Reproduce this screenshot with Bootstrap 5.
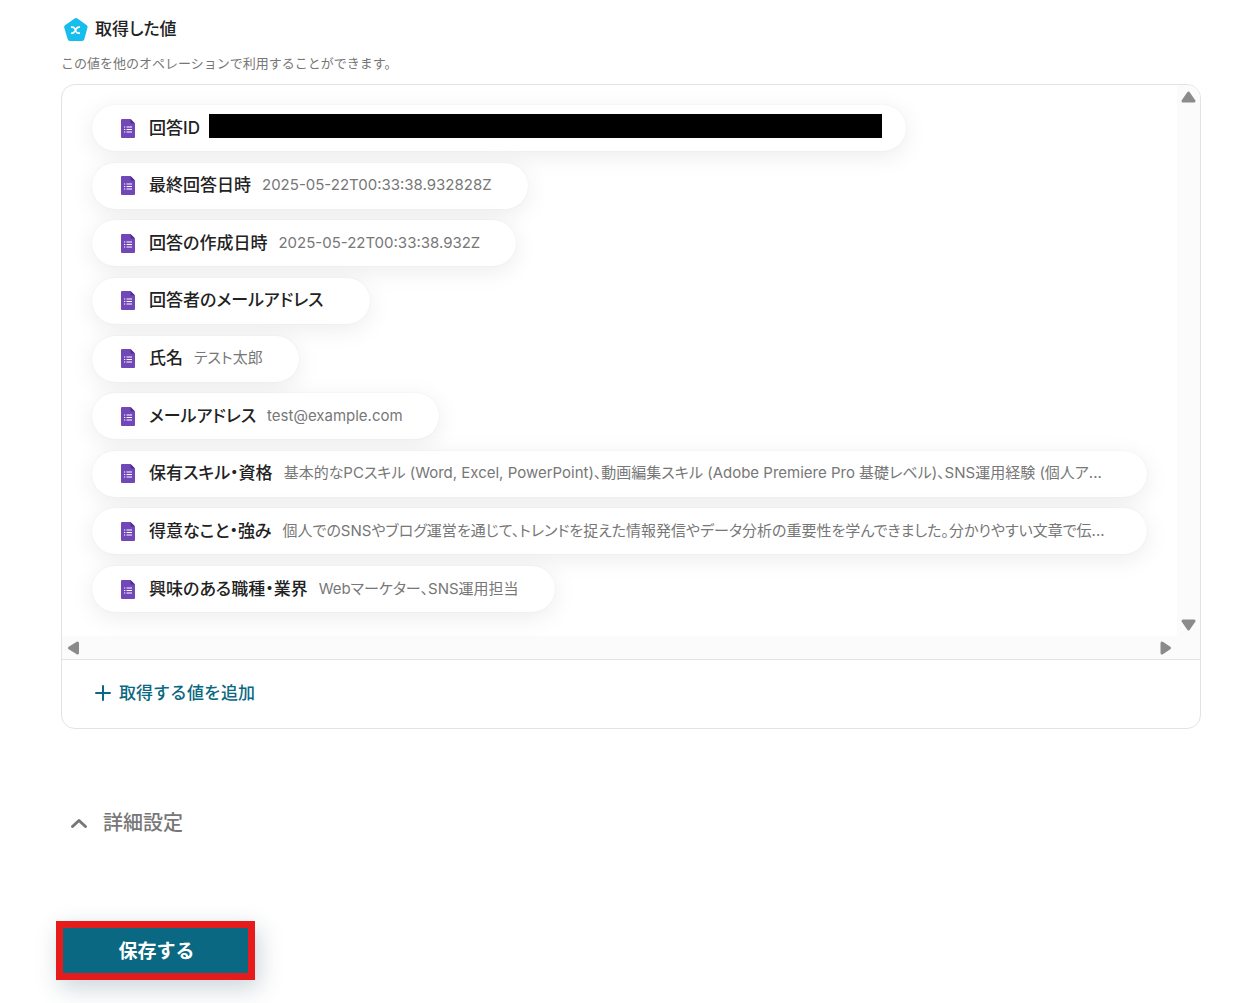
<!DOCTYPE html>
<html lang="ja">
<head>
<meta charset="utf-8">
<meta name="viewport" content="width=device-width, initial-scale=1">
<title>取得した値</title>
<link href="https://cdn.jsdelivr.net/npm/bootstrap@5.3.0/dist/css/bootstrap.min.css" rel="stylesheet">
<style>
  body { font-family: Inter, "Noto Sans CJK JP", sans-serif; font-feature-settings: "palt"; color: #222; background: #fff; }
  .page-body { padding: 16px 51px 24px 61px; }
  .section-title { font-size: 17px; line-height: 26px; font-weight: 500; gap: 6px; padding-left: 2px; }
  .hint { font-size: 13px; line-height: 20px; color: #777; margin: 11px 0; font-feature-settings: normal; }
  .panel { border: 1px solid #e3e3e3; border-radius: 14px; overflow: hidden; }
  .scroller { display: grid; grid-template-columns: minmax(0, 1fr) 23px; grid-template-rows: auto 23px; border-bottom: 1px solid #e3e3e3; }
  .values { min-height: 551px; padding: 20px 30px 24px; overflow: hidden; }
  .pill { height: 46px; max-width: 100%; border-radius: 23px; background: #fff; padding: 0 36px 0 29px; box-shadow: 0 5px 24px rgba(0, 0, 0, .08), 0 0 2px rgba(0, 0, 0, .06); }
  .pill-redacted { padding-right: 24px; }
  .pill svg { margin-right: 14px; }
  .pill-name { font-size: 17px; line-height: 26px; font-weight: 500; margin-right: 11px; padding-bottom: 1px; }
  .pill-redacted .pill-name { margin-right: 9px; }
  .pill-value { font-size: 15px; line-height: 24px; color: #777; padding-bottom: 1px; }
  .redaction { width: 673px; height: 24px; background: #000; margin-bottom: 4px; }
  .track { background: #fbfbfb; }
  .track-y { padding: 6px 4px 5px; }
  .track-x { padding: 0 5px; }
  .corner { background: #fbfbfb; }
  .add-link { color: #0b6882; font-size: 17px; line-height: 26px; font-weight: 500; gap: 8px; }
  .panel-foot { padding: 20px 33px 22px; }
  .details-toggle { color: #777; font-size: 20px; line-height: 30px; font-weight: 500; gap: 15px; margin-top: 79px; padding-left: 9px; }
  .save-area { margin: 83px 0 0 -5px; }
  .save-btn { border: 7px solid #e61c1c; border-radius: 0; width: 199px; height: 59px; background: #0b6882; color: #fff; font-size: 19px; line-height: 28px; font-weight: 700; padding: 2px 0 0 2px; box-shadow: 4px 8px 24px rgba(20, 60, 80, .22); }
  .save-btn:hover { background: #0b6882; color: #fff; border-color: #e61c1c; }
</style>
<script src="https://cdn.jsdelivr.net/npm/bootstrap@5.3.0/dist/js/bootstrap.bundle.min.js"></script>
</head>
<body>
<svg class="d-none">
  <symbol id="form-icon" viewBox="0 0 14 19">
    <path d="M1 0H9.500l4.500 4.500V18a1 1 0 0 1-1 1H1a1 1 0 0 1-1-1V1a1 1 0 0 1 1-1z" fill="#7248b9"/>
    <path d="M9.500 0l4.500 4.500H10.500a1 1 0 0 1-1-1z" fill="#4f2f8c"/>
    <path d="M5.500 8H11M5.500 10.500H11M5.500 13H11M3 8h1.200M3 10.500h1.200M3 13h1.200" stroke="#fff" stroke-width="1.100"/>
  </symbol>
</svg>
<main class="page-body">
  <h1 class="section-title d-flex align-items-center mb-0">
    <svg width="26" height="26" viewBox="0 0 26 26" aria-hidden="true">
      <path d="M11.600 2.600Q13 1.600 14.400 2.600L23.800 9.200Q25 10.200 24.500 11.600L21.300 23.300Q20.800 25 19.200 25H6.800Q5.200 25 4.700 23.300L1.200 11.600Q.8 10.200 2 9.200Z" fill="#17bdec"/>
      <path d="M8 11.200c2.300-.4 3.300.3 4 1.800l1 2.500c.6 1.400 1.800 2 4 1.600M17 11.200c-2.300-.4-3.400.6-4.500 2.900s-2.200 3.500-4.500 3.100" fill="none" stroke="#fff" stroke-width="1.700"/>
    </svg>
    取得した値
  </h1>
  <p class="hint">この値を他のオペレーションで利用することができます。</p>

  <section class="panel">
    <div class="scroller">
      <ul class="values list-unstyled mb-0 d-flex flex-column justify-content-between align-items-start">
        <li class="pill pill-redacted d-flex align-items-center"><svg class="flex-shrink-0" width="14" height="19"><use href="#form-icon"/></svg><span class="pill-name text-nowrap">回答ID</span><span class="redaction"></span></li>
        <li class="pill d-flex align-items-center"><svg class="flex-shrink-0" width="14" height="19"><use href="#form-icon"/></svg><span class="pill-name text-nowrap">最終回答日時</span><span class="pill-value text-truncate">2025-05-22T00:33:38.932828Z</span></li>
        <li class="pill d-flex align-items-center"><svg class="flex-shrink-0" width="14" height="19"><use href="#form-icon"/></svg><span class="pill-name text-nowrap">回答の作成日時</span><span class="pill-value text-truncate">2025-05-22T00:33:38.932Z</span></li>
        <li class="pill d-flex align-items-center"><svg class="flex-shrink-0" width="14" height="19"><use href="#form-icon"/></svg><span class="pill-name text-nowrap">回答者のメールアドレス</span></li>
        <li class="pill d-flex align-items-center"><svg class="flex-shrink-0" width="14" height="19"><use href="#form-icon"/></svg><span class="pill-name text-nowrap">氏名</span><span class="pill-value text-truncate">テスト太郎</span></li>
        <li class="pill d-flex align-items-center"><svg class="flex-shrink-0" width="14" height="19"><use href="#form-icon"/></svg><span class="pill-name text-nowrap">メールアドレス</span><span class="pill-value text-truncate">test@example.com</span></li>
        <li class="pill w-100 d-flex align-items-center"><svg class="flex-shrink-0" width="14" height="19"><use href="#form-icon"/></svg><span class="pill-name text-nowrap">保有スキル・資格</span><span class="pill-value text-nowrap">基本的なPCスキル (Word, Excel, PowerPoint)、動画編集スキル (Adobe Premiere Pro 基礎レベル)、SNS運用経験 (個人ア...</span></li>
        <li class="pill w-100 d-flex align-items-center"><svg class="flex-shrink-0" width="14" height="19"><use href="#form-icon"/></svg><span class="pill-name text-nowrap">得意なこと・強み</span><span class="pill-value text-nowrap">個人でのSNSやブログ運営を通じて、トレンドを捉えた情報発信やデータ分析の重要性を学んできました。分かりやすい文章で伝...</span></li>
        <li class="pill d-flex align-items-center"><svg class="flex-shrink-0" width="14" height="19"><use href="#form-icon"/></svg><span class="pill-name text-nowrap">興味のある職種・業界</span><span class="pill-value text-truncate">Webマーケター、SNS運用担当</span></li>
      </ul>
      <div class="track track-y d-flex flex-column justify-content-between" aria-hidden="true">
        <svg width="15" height="12"><path d="M7.500 2L13 10H2Z" fill="#8b8b8b" stroke="#8b8b8b" stroke-width="3" stroke-linejoin="round"/></svg>
        <svg width="15" height="12"><path d="M7.500 10L13 2H2Z" fill="#8b8b8b" stroke="#8b8b8b" stroke-width="3" stroke-linejoin="round"/></svg>
      </div>
      <div class="track track-x d-flex align-items-center justify-content-between" aria-hidden="true">
        <svg width="12" height="14"><path d="M2.500 7L10.500 2V12Z" fill="#8b8b8b" stroke="#8b8b8b" stroke-width="3" stroke-linejoin="round"/></svg>
        <svg width="12" height="14"><path d="M9.500 7L2 2V12Z" fill="#8b8b8b" stroke="#8b8b8b" stroke-width="3" stroke-linejoin="round"/></svg>
      </div>
      <div class="corner"></div>
    </div>
    <div class="panel-foot">
      <button type="button" class="add-link btn p-0 border-0 d-flex align-items-center">
        <svg width="16" height="16" viewBox="0 0 16 16" aria-hidden="true"><path d="M8 1V15M1 8H15" stroke="#0b6882" stroke-width="2" stroke-linecap="round"/></svg>
        取得する値を追加
      </button>
    </div>
  </section>

  <button type="button" class="details-toggle btn border-0 py-0 pe-0 d-flex align-items-center">
    <svg width="18" height="12" viewBox="0 0 18 12" aria-hidden="true"><path d="M2.500 9.500L9 3.500L15.500 9.500" fill="none" stroke="#777" stroke-width="3" stroke-linecap="round" stroke-linejoin="round"/></svg>
    詳細設定
  </button>

  <div class="save-area">
    <button type="submit" class="save-btn btn">保存する</button>
  </div>
</main>
</body>
</html>
